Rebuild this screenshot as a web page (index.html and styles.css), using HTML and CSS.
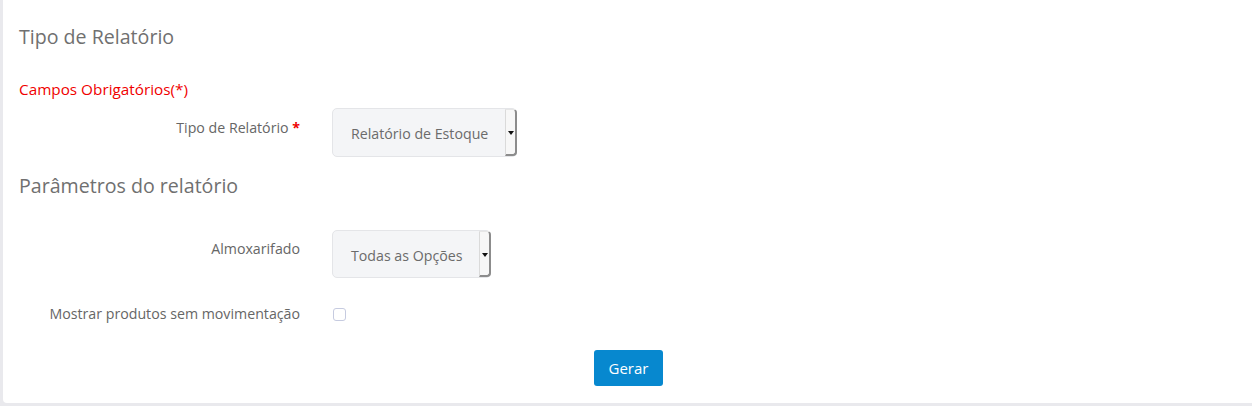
FILE: index.html
```html
<!DOCTYPE html>
<html lang="pt">
<head>
<meta charset="utf-8">
<link rel="stylesheet" href="styles.css">
</head>
<body>
<div class="card">
  <h2 class="section-title">Tipo de Relatório</h2>
  <p class="required-note">Campos Obrigatórios(*)</p>
  <div class="form-row first-row">
    <label class="form-label lbl-a">Tipo de Relatório <span class="req">*</span></label>
    <div class="select-box">
      <span class="select-text">Relatório de Estoque</span>
      <span class="select-toggle"><span class="caret"></span></span>
    </div>
  </div>
  <h2 class="section-title second-title">Parâmetros do relatório</h2>
  <div class="form-row second-row">
    <label class="form-label lbl-b">Almoxarifado</label>
    <div class="select-box short">
      <span class="select-text">Todas as Opções</span>
      <span class="select-toggle"><span class="caret"></span></span>
    </div>
  </div>
  <div class="form-row check-row">
    <label class="form-label lbl-c">Mostrar produtos sem movimentação</label>
    <div class="check-wrap"><span class="checkbox"></span></div>
  </div>
  <div class="actions">
    <button class="btn-primary" type="button">Gerar</button>
  </div>
</div>
</body>
</html>
```

FILE: styles.css
```css
* { box-sizing: border-box; }
html, body { margin: 0; padding: 0; }
body {
  background: #e9e9ed;
  font-family: "Open Sans", "Liberation Sans", sans-serif;
  height: 406px;
  overflow: hidden;
}
.card {
  margin-left: 3px;
  height: 403px;
  background: #fff;
  border-radius: 0 0 0 4px;
  padding: 25px 16px 0 16px;
}
.section-title {
  margin: 0;
  font-size: 19.6px;
  line-height: 24px;
  font-weight: 400;
  color: #707070;
}
.required-note {
  margin: 30px 0 0 0;
  font-size: 15.3px;
  line-height: 20px;
  color: #f00000;
}
.form-row {
  display: grid;
  grid-template-columns: 281px auto;
  column-gap: 32px;
  align-items: start;
}
.first-row { margin-top: 9px; }
.second-title { margin-top: 17px; }
.second-row { margin-top: 32px; }
.check-row { margin-top: 26px; }
.form-label {
  text-align: right;
  font-size: 14.2px;
  line-height: 20px;
  color: #666;
}
.lbl-a { padding-top: 10px; }
.lbl-b { padding-top: 9px; }
.req { color: #e00; font-weight: 700; }
.select-box {
  justify-self: start;
  display: flex;
  align-items: stretch;
  height: 49px;
  background: #f4f5f7;
  border: 1px solid #e4e5e8;
  border-radius: 5px;
  padding-left: 18px;
}
.select-box.short { height: 48px; }
.select-text {
  align-self: center;
  font-size: 14.2px;
  line-height: 20px;
  color: #6b6b6b;
  padding-top: 3px;
  margin-right: 17px;
}
.select-toggle {
  width: 12px;
  display: flex;
  align-items: center;
  justify-content: center;
  background: #f7f7f7;
  border-left: 1px solid #dadada;
  border-top: 1px solid #e6e6e6;
  border-right: 2px solid #8c8c8c;
  border-bottom: 2px solid #8c8c8c;
  border-radius: 0 4px 4px 0;
  margin-right: -1px;
}
.caret {
  width: 0; height: 0;
  border-left: 3px solid transparent;
  border-right: 3px solid transparent;
  border-top: 4px solid #111;
  margin-top: 2px;
}
.check-wrap {
  display: flex;
  align-items: center;
  height: 20px;
  padding-left: 1px;
}
.checkbox {
  width: 13px;
  height: 13px;
  border: 1px solid #c6cbe0;
  border-radius: 3px;
  background: #fff;
}
.actions {
  display: flex;
  justify-content: center;
  margin-top: 26px;
  padding-left: 2px;
}
.btn-primary {
  width: 69px;
  height: 36px;
  border: none;
  border-radius: 3px;
  background: #0788cf;
  color: #fff;
  font-family: "Open Sans", "Liberation Sans", sans-serif;
  font-size: 15px;
  padding: 0;
}
```
